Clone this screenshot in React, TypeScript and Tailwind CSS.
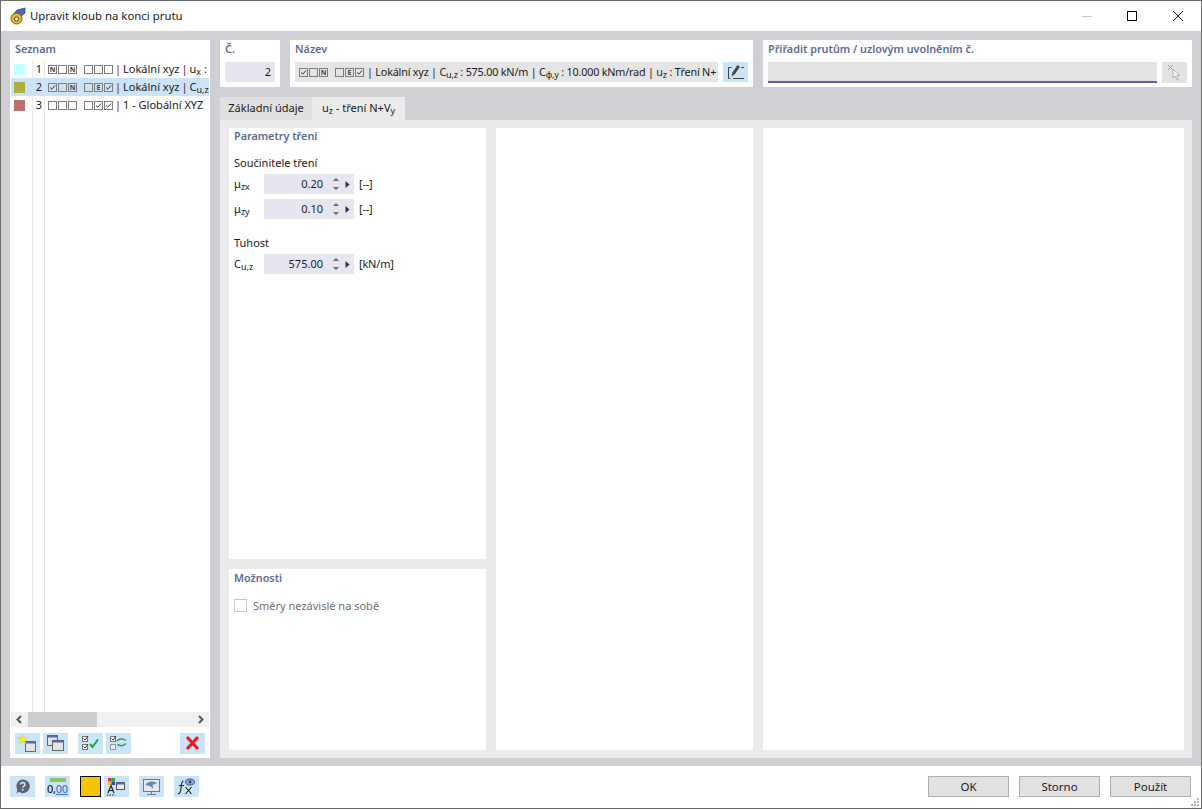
import type { ReactNode } from "react";

const font = { fontFamily: '"Noto Sans", "Open Sans", sans-serif' };

function Box({ kind }: { kind?: "N" | "E" | "c" }) {
    return (
        <span className="w-[9px] h-[9px] border border-[#7d7d7d] flex items-center justify-center shrink-0">
            {kind === "c" && (
                <svg width="7" height="7" viewBox="0 0 7 7">
                    <path d="M1 3.5 L2.8 5.2 L6 1.5" fill="none" stroke="#333" strokeWidth="1" />
                </svg>
            )}
            {(kind === "N" || kind === "E") && (
                <span className="text-[7px] leading-none font-bold text-[#444]">{kind}</span>
            )}
        </span>
    );
}

function Boxes({ a, b }: { a: (string | undefined)[]; b: (string | undefined)[] }) {
    return (
        <span className="flex items-center shrink-0">
            <span className="flex gap-[1px]">
                {a.map((k, i) => <Box key={i} kind={k as "N"} />)}
            </span>
            <span className="flex gap-[1px] ml-[7px]">
                {b.map((k, i) => <Box key={i} kind={k as "N"} />)}
            </span>
        </span>
    );
}

function S({ children }: { children: ReactNode }) {
    return <span className="text-[9px] relative top-[2px] leading-none">{children}</span>;
}

function Pipe() {
    return <span className="text-[#7a1030]">|</span>;
}

function ListRow({ num, color, selected, a, b, children }: { num: number; color: string; selected?: boolean; a: (string | undefined)[]; b: (string | undefined)[]; children: ReactNode }) {
    return (
        <div className={`h-[18px] flex items-center whitespace-nowrap overflow-hidden ${selected ? "bg-[#cce4f7]" : ""}`}>
            <span className="w-[11px] h-[11px] ml-[3px] shrink-0" style={{ background: color }} />
            <span className="w-[20px] pr-[3px] text-right shrink-0">{num}</span>
            <span className="ml-[3px] flex items-center">
                <Boxes a={a} b={b} />
            </span>
            <span className="ml-[2px] flex items-center gap-[2px]">{children}</span>
        </div>
    );
}

function ToolBtn({ children, className = "" }: { children: ReactNode; className?: string }) {
    return (
        <div className={`w-[25px] h-[21px] bg-[#cce4f7] shrink-0 ${className}`}>
            <svg width="25" height="21" viewBox="0 0 25 21">{children}</svg>
        </div>
    );
}

function Win({ x, y, w = 10, h = 10 }: { x: number; y: number; w?: number; h?: number }) {
    return (
        <g>
            <rect x={x + 0.5} y={y + 0.5} width={w} height={h} fill="#e4e4e4" stroke="#666" strokeWidth="1" />
            <rect x={x + 0.5} y={y + 0.5} width={w} height="2" fill="#4f6bb5" />
        </g>
    );
}

function Spin({ value, unit, label }: { value: string; unit: string; label: ReactNode }) {
    return (
        <div className="flex items-center h-[20px]">
            <span className="w-[30px] shrink-0">{label}</span>
            <div className="w-[90px] h-[20px] bg-[#e6e6f0] flex items-center shrink-0">
                <span className="w-[59px] text-right">{value}</span>
                <svg width="8" height="14" viewBox="0 0 8 14" className="ml-[9px]">
                    <path d="M4 1 L7 4 H1 Z" fill="#666" />
                    <path d="M4 13 L7 10 H1 Z" fill="#666" />
                </svg>
                <svg width="5" height="7" viewBox="0 0 5 7" className="ml-[5px]">
                    <path d="M0.5 0 L4.5 3.5 L0.5 7 Z" fill="#333" />
                </svg>
            </div>
            <span className="ml-[5px] tracking-[-0.2px]">{unit}</span>
        </div>
    );
}

function Heading({ children }: { children: ReactNode }) {
    return <div className="font-semibold text-[#5d6b92] text-[10.8px] leading-[16px] whitespace-nowrap">{children}</div>;
}

function BottomBtn({ label }: { label: string }) {
    return (
        <div className="w-[81px] h-[21px] bg-[#e1e1e1] border border-[#adadad] flex items-center justify-center text-[11.5px]">
            {label}
        </div>
    );
}

export default function App() {
    return (
        <div style={font} className="w-[1202px] h-[809px] border border-[#6f6f6f] bg-white flex flex-col text-[11px] text-[#1a1a1a] overflow-hidden">
            {/* title bar */}
            <div className="h-[30px] shrink-0 flex items-center bg-white">
                <svg width="18" height="18" viewBox="0 0 18 18" className="ml-[8px]">
                    <path d="M3 9 L8 3 L16 1 L16 6 L10 11 Z" fill="#4f6bb5" stroke="#2f3f70" strokeWidth="0.7" />
                    <circle cx="7.5" cy="11.5" r="5.5" fill="#e8b820" stroke="#5a4a10" strokeWidth="0.8" />
                    <circle cx="7.5" cy="12" r="2" fill="#fff" stroke="#333" strokeWidth="0.9" />
                </svg>
                <span className="ml-[3px] text-[11.4px]">Upravit kloub na konci prutu</span>
                <div className="ml-auto flex items-center">
                    <div className="w-[10px] h-px bg-[#c4c4c4] mr-[35px]" />
                    <div className="w-[10px] h-[10px] border border-black mr-[36px]" />
                    <svg width="10" height="10" viewBox="0 0 10 10" className="mr-[18px]">
                        <path d="M0 0 L10 10 M10 0 L0 10" stroke="#111" strokeWidth="1" />
                    </svg>
                </div>
            </div>

            {/* body */}
            <div className="h-[735px] shrink-0 bg-[#d0d0d4] flex gap-[10px] pl-[9px] pr-[9px] pt-[9px] pb-[8px]">
                {/* list */}
                <div className="w-[200px] shrink-0 bg-white flex flex-col">
                    <div className="px-[5px] h-[18px] flex items-center shrink-0"><Heading>Seznam</Heading></div>
                    <div className="h-[2px] shrink-0" />
                    <div className="flex-1 relative overflow-hidden mx-px">
                        <div className="absolute left-[21px] top-0 bottom-0 w-px bg-[#e8e8e8]" />
                        <div className="absolute left-[33px] top-0 bottom-0 w-px bg-[#e8e8e8]" />
                        <div className="relative">
                            <ListRow num={1} color="#c4ffff" a={["N", undefined, "N"]} b={[undefined, undefined, undefined]}>
                                <Pipe /><span>Lokální xyz</span><Pipe /><span>u<S>x</S> : (</span>
                            </ListRow>
                            <ListRow num={2} color="#b0ae40" selected a={["c", undefined, "N"]} b={[undefined, "E", "c"]}>
                                <Pipe /><span>Lokální xyz</span><Pipe /><span>C<S>u,z</S> : 575</span>
                            </ListRow>
                            <ListRow num={3} color="#b87070" a={[undefined, undefined, undefined]} b={[undefined, "c", "c"]}>
                                <Pipe /><span>1 - Globální XYZ</span>
                            </ListRow>
                        </div>
                    </div>
                    <div className="h-[15px] mx-px bg-[#f0f0f0] flex items-center shrink-0">
                        <svg width="17" height="15" viewBox="0 0 17 15"><path d="M10 4 L6.5 7.5 L10 11" fill="none" stroke="#555" strokeWidth="2" /></svg>
                        <div className="w-[69px] h-[15px] bg-[#cdcdcd]" />
                        <svg width="17" height="15" viewBox="0 0 17 15" className="ml-auto"><path d="M7 4 L10.5 7.5 L7 11" fill="none" stroke="#555" strokeWidth="2" /></svg>
                    </div>
                    <div className="h-[31px] shrink-0 flex items-start pt-[6px] pl-[5px]">
                        <ToolBtn>
                            <Win x={10} y={8} />
                            <path d="M7.7 1.5 L9 4.8 L12.5 5 L9.8 7.2 L10.7 10.6 L7.7 8.7 L4.7 10.6 L5.6 7.2 L2.9 5 L6.4 4.8 Z" fill="#f8e832" stroke="#d8c420" strokeWidth="0.4" />
                        </ToolBtn>
                        <ToolBtn className="ml-[3px]">
                            <Win x={4} y={2} />
                            <Win x={9} y={7} w={11} />
                        </ToolBtn>
                        <ToolBtn className="ml-[10px]">
                            <rect x="4.5" y="3.5" width="5" height="5" fill="#fff" stroke="#777" />
                            <rect x="4.5" y="11.5" width="5" height="5" fill="#fff" stroke="#777" />
                            <path d="M5.5 5.5 L7 7 L10 3 M5.5 13.5 L7 15 L10 11" fill="none" stroke="#333" />
                            <path d="M12 11 L14.5 14 L20 6.5" fill="none" stroke="#16a34a" strokeWidth="2" />
                        </ToolBtn>
                        <ToolBtn className="ml-[3px]">
                            <rect x="4.5" y="3.5" width="5" height="5" fill="#fff" stroke="#777" />
                            <rect x="4.5" y="11.5" width="5" height="5" fill="#e8f0f6" stroke="#999" />
                            <path d="M5.5 5.5 L7 7 L10 3" fill="none" stroke="#333" />
                            <path d="M11 8 C13 5.5 17 5.5 20 7.5 M20 10.5 C17 13.5 14 13 11.5 11.5" fill="none" stroke="#2f9e5a" strokeWidth="1.5" />
                        </ToolBtn>
                        <ToolBtn className="ml-[49px]">
                            <path d="M7 4 L18 16 M18 4 L7 16" stroke="#ee1c25" strokeWidth="3.2" />
                        </ToolBtn>
                    </div>
                </div>

                {/* right side */}
                <div className="flex-1 flex flex-col min-w-0">
                    <div className="h-[47px] shrink-0 flex gap-[10px]">
                        <div className="w-[60px] bg-white px-[5px] pt-px">
                            <Heading>Č.</Heading>
                            <div className="mt-[5px] h-[20px] bg-[#e6e6f0] flex items-center justify-end pr-[4px]">2</div>
                        </div>
                        <div className="w-[463px] bg-white px-[5px] pt-px">
                            <Heading>Název</Heading>
                            <div className="mt-[5px] flex gap-[5px]">
                                <div className="w-[423px] h-[20px] bg-[#e5e5e5] flex items-center pl-[4px] gap-[3px] whitespace-nowrap overflow-hidden">
                                    <Boxes a={["c", undefined, "N"]} b={[undefined, "E", "c"]} />
                                    <span className="text-[10.8px] tracking-[-0.2px]">| Lokální xyz | C<S>u,z</S> : 575.00 kN/m | C<S>φ,y</S> : 10.000 kNm/rad | u<S>z</S> : Tření N+</span>
                                </div>
                                <div className="w-[25px] h-[20px] bg-[#cce4f7] shrink-0">
                                    <svg width="25" height="20" viewBox="0 0 25 20">
                                        <path d="M8.5 5.5 H5.5 V16.5 H7.5 M10 16.5 H21 M18 5.5 H21" fill="none" stroke="#444" />
                                        <path d="M8.5 14.5 L9.5 10.5 L14.5 3 L17 4.7 L12 12 Z" fill="#444" />
                                    </svg>
                                </div>
                            </div>
                        </div>
                        <div className="flex-1 bg-white px-[5px] pt-px">
                            <Heading>Přiřadit prutům / uzlovým uvolněním č.</Heading>
                            <div className="mt-[5px] flex gap-[5px]">
                                <div className="w-[389px] h-[21px] bg-[#e3e3e3] border-b-2 border-[#5b5ea6]" />
                                <div className="w-[25px] h-[21px] bg-[#e3e3e3] flex items-center justify-center">
                                    <svg width="16" height="17" viewBox="0 0 16 17">
                                        <path d="M6 5 L6 14 L8.2 12 L10 16 L11.5 15.3 L9.8 11.5 L13 11.3 Z" fill="#f2f2f2" stroke="#aaa" strokeWidth="0.9" />
                                        <path d="M1 1 L6 6 M6 1 L1 6" stroke="#999" strokeWidth="1" />
                                    </svg>
                                </div>
                            </div>
                        </div>
                    </div>

                    {/* tabs */}
                    <div className="h-[23px] mt-[10px] shrink-0 flex">
                        <div className="w-[92px] bg-[#e0e0e0] flex items-center justify-center whitespace-nowrap">Základní údaje</div>
                        <div className="w-[93px] bg-[#ebebeb] flex items-center justify-center whitespace-nowrap">
                            <span>u<S>z</S> - tření N+V<S>y</S></span>
                        </div>
                    </div>

                    {/* tab content */}
                    <div className="flex-1 min-h-0 bg-[#ebebeb] p-[8px] pl-[9px] flex gap-[10px]">
                        <div className="w-[257px] shrink-0 flex flex-col gap-[10px]">
                            <div className="h-[431px] bg-white px-[5px] shrink-0">
                                <Heading>Parametry tření</Heading>
                                <div className="mt-[11px] leading-[16px]">Součinitele tření</div>
                                <div className="mt-[3px] flex flex-col gap-[5px]">
                                    <Spin value="0.20" unit="[--]" label={<span>μ<S>zx</S></span>} />
                                    <Spin value="0.10" unit="[--]" label={<span>μ<S>zy</S></span>} />
                                </div>
                                <div className="mt-[16px] leading-[16px]">Tuhost</div>
                                <div className="mt-[3px]">
                                    <Spin value="575.00" unit="[kN/m]" label={<span>C<S>u,z</S></span>} />
                                </div>
                            </div>
                            <div className="flex-1 bg-white px-[5px] pt-px">
                                <Heading>Možnosti</Heading>
                                <div className="mt-[11px] flex items-center gap-[6px] text-[#6f6f6f]">
                                    <span className="w-[13px] h-[13px] border border-[#c8c8c8]" />
                                    <span className="relative top-px">Směry nezávislé na sobě</span>
                                </div>
                            </div>
                        </div>
                        <div className="w-[257px] shrink-0 bg-white" />
                        <div className="flex-1 bg-white" />
                    </div>
                </div>
            </div>

            {/* footer */}
            <div className="flex-1 min-h-0 bg-white relative flex items-start pt-[10px] pl-[9px]">
                <ToolBtn>
                    <path d="M13 3.5 A6.8 6.8 0 1 1 9 15.8 L6.5 17.5 L7.4 13.8 A6.8 6.8 0 0 1 13 3.5 Z" fill="#5f6368" />
                    <path d="M10.5 8.5 C10.8 6 15.2 6 15 8.6 C14.9 10 13 10.1 12.8 11.6" fill="none" stroke="#cce4f7" strokeWidth="1.6" />
                    <circle cx="12.7" cy="13.7" r="1" fill="#cce4f7" />
                </ToolBtn>
                <div className="ml-[10px] w-[25px] h-[21px] bg-[#cce4f7] shrink-0 flex flex-col items-center pt-[2px]">
                    <div className="w-[16px] h-[4px] bg-[#8cc26a]" />
                    <div className="text-[11px] leading-[13px] font-medium text-[#222] tracking-tight">0,<span className="text-[#3b78d8] underline">00</span></div>
                </div>
                <div className="ml-[10px] w-[21px] h-[21px] bg-[#f5c400] border border-black shrink-0" />
                <ToolBtn className="ml-[3px]">
                    <rect x="4" y="2" width="3.5" height="3.5" fill="#d33" />
                    <rect x="7.5" y="2" width="3.5" height="3.5" fill="#3a3" />
                    <rect x="4" y="5.5" width="3.5" height="3.5" fill="#e8c020" />
                    <rect x="7.5" y="5.5" width="3.5" height="3.5" fill="#34c" />
                    <rect x="12.5" y="6.5" width="8" height="7" fill="#eee" stroke="#555" />
                    <rect x="12.5" y="6.5" width="8" height="2" fill="#4f6bb5" />
                    <path d="M4 17 L7 9.5 L10 17 M5.2 14.5 H8.8" fill="none" stroke="#222" strokeWidth="1.2" />
                    <path d="M3 19 H11" stroke="#222" strokeDasharray="1.5 1" />
                </ToolBtn>
                <ToolBtn className="ml-[10px]">
                    <rect x="4.5" y="3.5" width="16" height="12" fill="#e4e8ee" stroke="#777" />
                    <path d="M6.5 9 C9 4.5 14 5 18 7 L13.5 9 L14.5 13 L11 10 Z" fill="#6a87a8" />
                    <path d="M12.5 15.5 V18 M8 18.5 H17" stroke="#777" />
                </ToolBtn>
                <ToolBtn className="ml-[10px]">
                    <path d="M9.5 5 C7.5 5 7.5 8 7 12 C6.5 16 6 18 4 17.5 M5 9.5 H10" fill="none" stroke="#222" strokeWidth="1.1" />
                    <path d="M11.5 11 L17.5 18 M17.5 11 L11.5 18" stroke="#222" strokeWidth="1.1" />
                    <ellipse cx="16" cy="6" rx="4.5" ry="3" fill="#8fa8d8" stroke="#3f5a90" />
                    <circle cx="16" cy="6" r="1.4" fill="#27407a" />
                </ToolBtn>
                <div className="ml-auto flex gap-[10px] pr-[10px]">
                    <BottomBtn label="OK" />
                    <BottomBtn label="Storno" />
                    <BottomBtn label="Použít" />
                </div>
                <svg width="10" height="10" viewBox="0 0 10 10" className="absolute right-px bottom-px">
                    <path d="M7 1 h2 v2 h-2 Z M4 4 h2 v2 h-2 Z M7 4 h2 v2 h-2 Z M1 7 h2 v2 h-2 Z M4 7 h2 v2 h-2 Z M7 7 h2 v2 h-2 Z" fill="#b5b5b5" />
                </svg>
            </div>
        </div>
    );
}
